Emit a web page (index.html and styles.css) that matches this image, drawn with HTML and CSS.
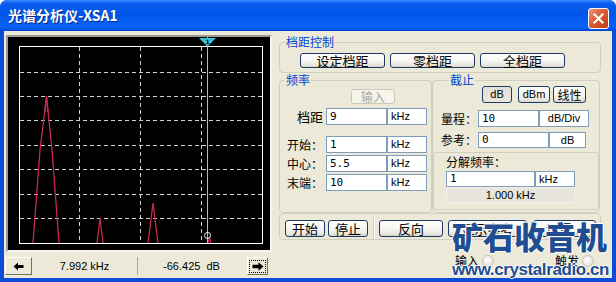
FILE: index.html
```html
<!DOCTYPE html>
<html lang="zh-CN">
<head>
<meta charset="utf-8">
<title>光谱分析仪-XSA1</title>
<link rel="stylesheet" href="styles.css">
</head>
<body>
<div class="window">
  <div class="titlebar">
    <span class="title">光谱分析仪-XSA1</span>
    <span class="close"><svg width="13" height="13" viewBox="0 0 13 13"><path d="M2.5 2.5 L10.5 10.5 M10.5 2.5 L2.5 10.5" stroke="#fff" stroke-width="2.2" stroke-linecap="square"/></svg></span>
  </div>
  <div class="body">
    <div class="left">
      <div class="scope">
        <svg width="262" height="213" viewBox="0 0 262 213">
          <g stroke="#d2d2d2" stroke-width="1" stroke-dasharray="4 3">
            <line x1="71.5" y1="10" x2="71.5" y2="206"/>
            <line x1="132.5" y1="10" x2="132.5" y2="206"/>
            <line x1="193.5" y1="10" x2="193.5" y2="206"/>
            <line x1="12" y1="35.5" x2="254" y2="35.5"/>
            <line x1="12" y1="59.5" x2="254" y2="59.5"/>
            <line x1="12" y1="83.5" x2="254" y2="83.5"/>
            <line x1="12" y1="108.5" x2="254" y2="108.5"/>
            <line x1="12" y1="132.5" x2="254" y2="132.5"/>
            <line x1="12" y1="157.5" x2="254" y2="157.5"/>
            <line x1="12" y1="181.5" x2="254" y2="181.5"/>
          </g>
          <rect x="11.5" y="9.5" width="243" height="197" fill="none" stroke="#ffffff"/>
          <g fill="none" stroke="#c8284a" stroke-width="1.3">
            <polyline points="25,206 32,113 38.5,59 44,113 51,206"/>
            <polyline points="37,75 38.5,59 40,75"/>
            <polyline points="89,206 92,181 95,206"/>
            <polyline points="140,206 145,166 150,206"/>
            <polyline points="200,206 201.5,201 203,206"/>
          </g>
          <line x1="199.5" y1="0" x2="199.5" y2="206" stroke="#6fd2e2" stroke-width="1"/>
          <polygon points="191,1 208,1 199.5,9.5" fill="#35c6da"/>
          <text x="199.5" y="7" font-family="DejaVu Sans" font-size="6" font-weight="700" text-anchor="middle" fill="#000">1</text>
          <circle cx="199.5" cy="198.5" r="3" fill="none" stroke="#e8f8fa" stroke-width="1"/>
        </svg>
      </div>
      <div class="status">
        <span class="sbtn"><svg width="11" height="9" viewBox="0 0 11 9"><path d="M0.5 4.5 L5 0.5 L5 3 L10.5 3 L10.5 6 L5 6 L5 8.5 Z" fill="#000"/></svg></span>
        <span class="sval f1">7.992 kHz</span>
        <span class="sval f2">-66.425&nbsp; dB</span>
        <span class="sbtn rbtn"><span class="focus"><svg width="12" height="9" viewBox="0 0 12 9"><path d="M11.5 4.5 L6.5 0.3 L6.5 2.8 L0.5 2.8 L0.5 6.2 L6.5 6.2 L6.5 8.7 Z" fill="#000"/></svg></span></span>
      </div>
    </div>
    <div class="right">
      <div class="grp gA">
        <span class="glabel">档距控制</span>
        <div class="btnrow">
          <span class="btn wide">设定档距</span>
          <span class="btn wide">零档距</span>
          <span class="btn wide">全档距</span>
        </div>
      </div>
      <div class="cols">
        <div class="grp gB">
          <span class="glabel">频率</span>
          <span class="btn disabled inbtn">输入</span>
          <div class="frow first"><span class="lab r">档距</span><span class="inp">9</span><span class="unit">kHz</span></div>
          <div class="frow gap"><span class="lab">开始：</span><span class="inp">1</span><span class="unit">kHz</span></div>
          <div class="frow next"><span class="lab">中心：</span><span class="inp">5.5</span><span class="unit">kHz</span></div>
          <div class="frow next"><span class="lab">末端：</span><span class="inp">10</span><span class="unit">kHz</span></div>
        </div>
        <div class="grp gC">
          <span class="glabel lc">截止</span>
          <div class="unitbtns">
            <span class="btn sm pressed b1">dB</span>
            <span class="btn sm b2">dBm</span>
            <span class="btn sm b3">线性</span>
          </div>
          <div class="crow c1"><span class="lab">量程：</span><span class="inp">10</span><span class="unit ctr">dB/Div</span></div>
          <div class="crow c2"><span class="lab">参考：</span><span class="inp">0</span><span class="unit ctr">dB</span></div>
          <div class="inner">
            <div class="ilabel">分解频率：</div>
            <div class="irow"><span class="inp">1</span><span class="unit">kHz</span></div>
            <div class="disp">1.000 kHz</div>
          </div>
        </div>
      </div>
      <div class="grp bottom">
        <span class="btn bb w40 m5">开始</span>
        <span class="btn bb w40 m3">停止</span>
        <span class="sep"></span>
        <span class="btn bb w64 m4">反向</span>
        <span class="btn bb w79 m5">显示参考</span>
        <span class="btn bb w63 m6">设置...</span>
      </div>
      <div class="terms">
        <span>输入</span><span class="dot d1"></span>
        <span class="t2">触发</span><span class="dot d1"></span>
      </div>
    </div>
  </div>
  <div class="watermark">
    <div class="wm1">矿石收音机</div>
    <div class="wm2">www.crystalradio.cn</div>
  </div>
</div>
</body>
</html>
```

FILE: styles.css
```css
* { box-sizing: border-box; }
html, body { margin: 0; padding: 0; background: #ffffff; }
body { font-family: "Noto Sans CJK SC", sans-serif; font-size: 12px; color: #000; }

.window {
  position: relative;
  width: 616px;
  height: 282px;
  background: #0b4bd8;
  border-radius: 7px 7px 0 0;
  display: flex;
  flex-direction: column;
  overflow: hidden;
}
.titlebar {
  height: 31px;
  flex: none;
  display: flex;
  align-items: flex-start;
  padding-left: 8px;
  background: linear-gradient(#3d8dff 0%, #0a5cf0 10%, #0055e8 45%, #0862f8 85%, #0456ee 94%, #0142cc 100%);
}
.title {
  flex: 1;
  line-height: 31px;
  color: #ffffff;
  font-weight: 700;
  font-size: 14px;
  text-shadow: 1px 1px 0 #0a2c8a;
}
.close {
  width: 21px;
  height: 21px;
  margin: 8px 7px 0 0;
  border: 1px solid #ffffff;
  border-radius: 3px;
  background: linear-gradient(135deg, #f0967a 0%, #dc5a35 45%, #c23d18 100%);
  display: flex;
  align-items: center;
  justify-content: center;
}

.body {
  flex: none;
  height: 247px;
  margin: 0 4px;
  background: #ece9d8;
  display: flex;
}

/* left: scope */
.left {
  width: 270px;
  flex: none;
  padding: 4px 0 0 2px;
  display: flex;
  flex-direction: column;
}
.scope {
  width: 266px;
  height: 217px;
  border: 2px solid;
  border-color: #9d9b8f #f4f3ee #f4f3ee #9d9b8f;
  background: #000000;
}
.scope svg { display: block; }
.status {
  display: flex;
  margin: 5px 0 0 -1px;
  height: 18px;
  font-family: "Liberation Sans", sans-serif;
  font-size: 11px;
}
.sbtn {
  width: 27px;
  height: 18px;
  border: 1px solid;
  border-color: #ffffff #716f64 #716f64 #ffffff;
  display: flex;
  align-items: center;
  justify-content: center;
}
.sval { line-height: 18px; text-align: center; }
.f1 { width: 105px; }
.f2 { width: 108px; border-left: 1px solid #aca899; }
.rbtn { width: 21px; margin-left: 2px; }
.focus {
  width: 17px;
  height: 13px;
  border: 1px dotted #000;
  display: flex;
  align-items: center;
  justify-content: center;
}

/* right panel */
.right {
  width: 338px;
  flex: none;
  padding: 11px 0 0 5px;
}
.grp {
  border: 1px solid #d0d0bf;
  border-radius: 4px;
}
.glabel {
  display: block;
  width: max-content;
  height: 14px;
  margin: -8px 0 0 5px;
  padding: 0 1px;
  line-height: 14px;
  background: #ece9d8;
  color: #0046d5;
  font-size: 12px;
}
.glabel.lc { margin-left: 16px; }

.btn {
  display: flex;
  align-items: center;
  justify-content: center;
  border: 1px solid #1c3c66;
  border-radius: 3px;
  background: linear-gradient(#ffffff 0%, #f6f5f1 55%, #e6e4da 88%, #d6d0c5 100%);
  font-size: 13px;
  line-height: 13px;
  color: #000;
  flex: none;
}
.gA { width: 322px; height: 31px; }
.btnrow { display: flex; gap: 5px; padding-left: 20px; margin-top: 4px; }
.wide { width: 85px; height: 15px; }

.cols { display: flex; margin-top: 7px; height: 133px; }
.gB { width: 153px; height: 133px; }
.gC { width: 168px; height: 133px; }

.disabled {
  border-color: #c9c7ba;
  background: #f5f4ea;
  color: #aca899;
  font-size: 12px;
}
.inbtn { width: 44px; height: 15px; margin: 2px 0 0 71px; }

.frow {
  display: grid;
  grid-template-columns: 46px 61px 40px;
  height: 17px;
}
.frow.first { margin-top: 4px; }
.frow.gap { margin-top: 11px; }
.frow.next { margin-top: 2px; }
.lab { line-height: 17px; padding-left: 7px; white-space: nowrap; font-size: 12px; }
.lab.r { text-align: right; padding: 0 3px 0 0; font-size: 13px; }
.inp {
  border: 1px solid #7f9db9;
  background: #ffffff;
  font-family: "DejaVu Sans Mono", monospace;
  font-size: 11px;
  line-height: 15px;
  padding-left: 3px;
}
.unit {
  border: 1px solid #7f9db9;
  background: #ffffff;
  font-family: "Liberation Sans", sans-serif;
  font-size: 11px;
  line-height: 15px;
  padding-left: 3px;
}
.unit.ctr { text-align: center; padding-left: 0; }

.unitbtns { display: flex; margin-top: -1px; padding-left: 49px; }
.sm { height: 17px; font-family: "Liberation Sans", "Noto Sans CJK SC", sans-serif; font-size: 11px; }
.b1 { width: 30px; }
.b2 { width: 32px; margin-left: 6px; }
.b3 { width: 33px; margin-left: 3px; font-family: "Noto Sans CJK SC", sans-serif; font-size: 12px; }
.pressed { background: linear-gradient(#e2e0d6, #e9e7de); }

.crow { display: grid; height: 17px; }
.crow .lab { padding-left: 8px; }
.c1 { grid-template-columns: 45px 61px 50px; margin-top: 7px; }
.c2 { grid-template-columns: 45px 71px 37px; margin-top: 5px; height: 16px; }
.c2 .lab { line-height: 16px; }
.c2 .inp, .c2 .unit { line-height: 14px; }

.inner {
  margin-top: 4px;
  height: 58px;
  border: 1px solid #d0d0bf;
  border-radius: 3px;
  padding-left: 12px;
}
.ilabel { margin-top: 2px; line-height: 14px; font-size: 12px; }
.irow {
  display: grid;
  grid-template-columns: 89px 40px;
  height: 16px;
  margin-top: 2px;
}
.irow .inp, .irow .unit { line-height: 14px; }
.disp {
  width: 129px;
  height: 16px;
  background: #e8e6dc;
  border: 1px solid #f3f2ec;
  text-align: center;
  font-family: "Liberation Sans", sans-serif;
  font-size: 11px;
  line-height: 14px;
}

.bottom {
  width: 322px;
  height: 27px;
  display: flex;
  align-items: center;
  padding-top: 3px;
}
.bb { height: 17px; }
.w40 { width: 40px; }
.w64 { width: 64px; }
.w79 { width: 79px; }
.w63 { width: 63px; }
.m3 { margin-left: 3px; }
.m4 { margin-left: 4px; }
.m5 { margin-left: 5px; }
.m6 { margin-left: 6px; }
.sep {
  align-self: stretch;
  width: 2px;
  margin-left: 5px;
  border-left: 1px solid #d0d0bf;
  border-right: 1px solid #ffffff;
}

.terms {
  display: flex;
  align-items: center;
  margin-top: 14px;
  padding-left: 176px;
  font-size: 12px;
  line-height: 14px;
}
.dot {
  width: 12px;
  height: 12px;
  margin-left: 3px;
  border-radius: 50%;
  border: 1px solid #c8c6ba;
  background: radial-gradient(circle at 40% 40%, #ffffff, #dcdacd);
}
.t2 { margin-left: 61px; }

/* watermark overlay */
.watermark {
  position: absolute;
  left: 452px;
  top: 220px;
  color: #1f4d8f;
  text-shadow: 1px 0 0 #fff, -1px 0 0 #fff, 0 1px 0 #fff, 0 -1px 0 #fff;
  pointer-events: none;
}
.wm1 {
  font-family: "Noto Sans CJK SC", sans-serif;
  font-weight: 900;
  font-size: 31px;
  line-height: 31px;
  height: 31px;
  white-space: nowrap;
}
.wm2 {
  margin-top: 10px;
  font-family: "Liberation Sans", sans-serif;
  font-weight: 700;
  font-size: 17px;
  letter-spacing: -0.4px;
  line-height: 18px;
  white-space: nowrap;
}
```
